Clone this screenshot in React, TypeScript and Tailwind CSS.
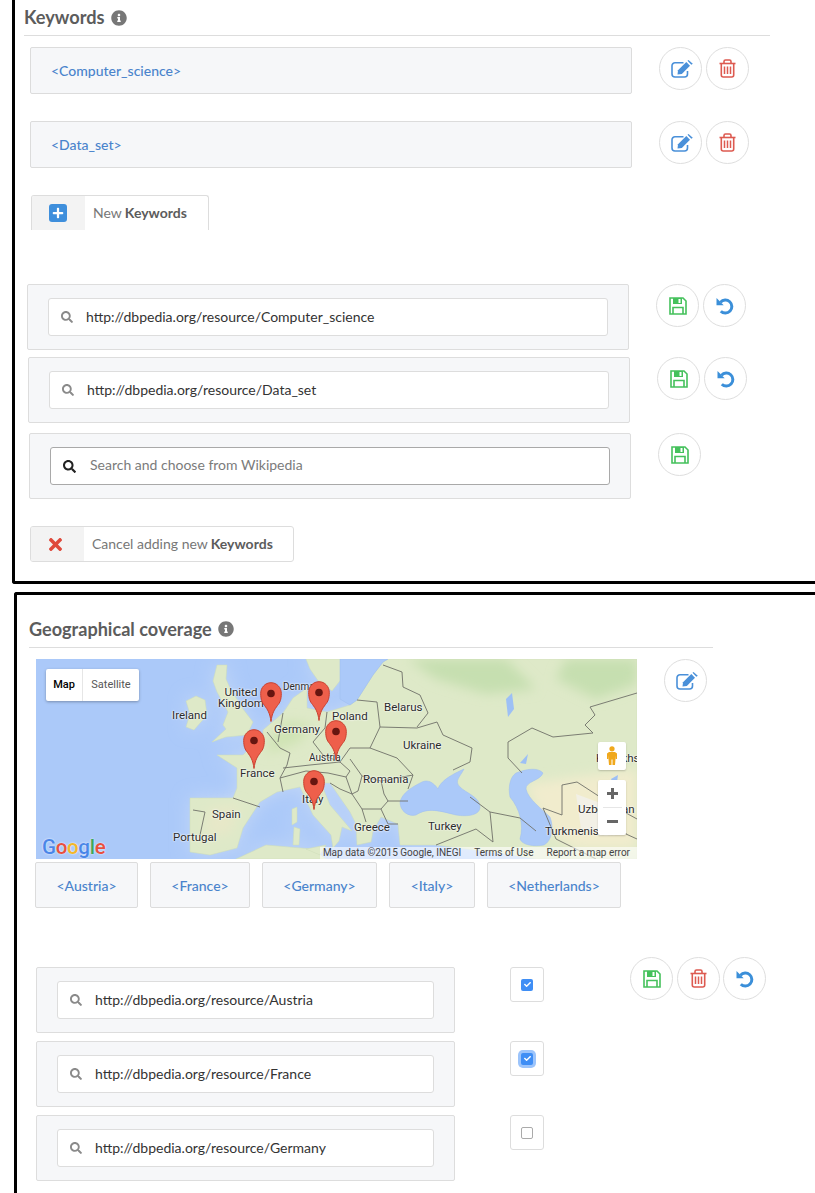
import type { ReactNode } from 'react'
import { FaInfoCircle, FaPlus, FaSearch, FaTimes, FaCheck } from 'react-icons/fa'

const CircleButton = ({ children }: { children: ReactNode }) => (
  <button className="flex h-[43px] w-[43px] items-center justify-center rounded-full border border-[#dedede] bg-white">
    {children}
  </button>
)

const EditIcon = () => (
  <svg className="ml-[2px]" width="22" height="18" viewBox="0 0 22 18">
    <path
      d="M12.500 2.800H4a3 3 0 0 0-3 3v8.200a3 3 0 0 0 3 3h9.500a3 3 0 0 0 3-3V11"
      fill="none"
      stroke="#4a90d9"
      strokeWidth="1.600"
    />
    <path d="M7 10.200 15.300 2 19 5.700 10.800 14 6.500 14.500Z" fill="#4a90d9" />
    <path d="M16.500.8 17.500 0 21.800 3.800 20.300 4.800Z" fill="#4a90d9" />
  </svg>
)

const TrashIcon = () => (
  <svg width="17" height="19" viewBox="0 0 17 19" fill="none" stroke="#dd5a50" strokeWidth="1.600">
    <path d="M.500 4.500H16.500" />
    <path d="M5 4.500V2.500A1.500 1.500 0 0 1 6.500 1h4A1.500 1.500 0 0 1 12 2.500V4.500" />
    <path d="M2.300 4.500V16a2 2 0 0 0 2 2h8.400a2 2 0 0 0 2-2V4.500" />
    <path d="M5.500 7.500V15M8.500 7.500V15M11.500 7.500V15" strokeWidth="1.500" />
  </svg>
)

const SaveIcon = () => (
  <svg width="18" height="18" viewBox="0 0 18 18">
    <path d="M1 1H14L17 4V17H1Z" fill="none" stroke="#45c15c" strokeWidth="1.600" />
    <path d="M4 1H13V7H4Z" fill="#45c15c" />
    <path d="M9.500 2H11.500V6H9.500Z" fill="#fff" />
    <path d="M4 17V10.500H14V17" fill="none" stroke="#45c15c" strokeWidth="1.600" />
  </svg>
)

const UndoIcon = () => (
  <svg width="18" height="18" viewBox="0 0 18 18">
    <path d="M4.500 5.200A6.500 6.500 0 1 1 4.800 14.200" fill="none" stroke="#3b8fd9" strokeWidth="3" />
    <path d="M.500 1V8.200H7.700Z" fill="#3b8fd9" />
  </svg>
)

const KeywordRow = ({ label }: { label: string }) => (
  <div className="ml-[15px] flex items-start">
    <div className="flex h-[47px] w-[602px] items-center rounded-[2px] border border-[#dcdcdc] bg-[#f6f7f9] pl-[20px] text-[14px] font-medium text-[#4a84cc]">
      {label}
    </div>
    <div className="ml-[27px] flex gap-1">
      <CircleButton>
        <EditIcon />
      </CircleButton>
      <CircleButton>
        <TrashIcon />
      </CircleButton>
    </div>
  </div>
)

const SearchBox = ({
  value,
  placeholder,
  className,
}: {
  value?: string
  placeholder?: string
  className: string
}) => (
  <div className={`rounded-[2px] border border-[#dddddd] bg-[#f6f7f9] px-[20px] py-[13px] ${className}`}>
    <div
      className={`flex h-[38px] items-center rounded-[3px] border bg-white pl-[12px] text-[14px] ${
        placeholder ? 'border-[#a9a9a9]' : 'border-[#dddddd]'
      }`}
    >
      {placeholder ? (
        <FaSearch className="text-[13px] text-[#222222]" />
      ) : (
        <FaSearch className="text-[12px] text-[#8a8a8a]" />
      )}
      <span className={placeholder ? 'ml-[14px] pb-[3px] text-[#7b7b7b]' : 'ml-[13px] pb-[2px] text-[#333333]'}>
        {value ?? placeholder}
      </span>
    </div>
  </div>
)

const Pin = ({ x, y }: { x: number; y: number }) => (
  <svg className="absolute" style={{ left: x, top: y }} width="22" height="40" viewBox="0 0 22 40">
    <path
      d="M11 39.500C10 31 7.500 27.500 4.500 23.500 2 20.500.7 17.500.7 11.500.7 5.500 5.200.7 11 .7s10.300 4.800 10.300 10.800c0 6-1.300 9-3.800 12-3 4-5.500 7.500-6.500 16z"
      fill="#ee5f4b"
      stroke="#c9402f"
      strokeWidth="1"
    />
    <circle cx="11" cy="11.500" r="3.800" fill="#661510" />
  </svg>
)

const mapLabels: { text: string; x: number; y: number; size?: string }[] = [
  { text: 'Ireland', x: 136, y: 51 },
  { text: 'Germany', x: 238, y: 65 },
  { text: 'Denma', x: 247, y: 23, size: 'text-[10px]' },
  { text: 'Poland', x: 296, y: 52 },
  { text: 'Belarus', x: 348, y: 43 },
  { text: 'Ukraine', x: 367, y: 81 },
  { text: 'Austria', x: 273, y: 94, size: 'text-[10px]' },
  { text: 'France', x: 204, y: 109 },
  { text: 'Italy', x: 266, y: 135 },
  { text: 'Romania', x: 327, y: 115 },
  { text: 'Spain', x: 176, y: 150 },
  { text: 'Portugal', x: 137, y: 173 },
  { text: 'Greece', x: 318, y: 163 },
  { text: 'Turkey', x: 392, y: 162 },
  { text: 'Turkmenistan', x: 509, y: 167 },
  { text: 'Uzbekistan', x: 542, y: 145 },
  { text: 'Kazakhstan', x: 560, y: 94 },
]

const land = [
  'M227 71 247 54 257 39 271 29 271 49 291 53 314 46 321 41 337 16 347 3 352 0 601 0 601 200 500 200 470 195 400 186 364 186 362 165 345 158 337 172 335 183 321 186 320 165 314 153 294 124 288 124 287 129 294 146 311 166 316 172 306 168 303 182 297 189 295 176 277 156 264 128 241 133 224 143 207 169 201 189 174 196 154 193 154 139 197 139 201 129 201 109 181 96 207 96 227 76Z',
  'M150 42 160 37 169 41 171 56 158 71 150 68 154 55Z',
  'M181 6 191 6 190 20 194 29 207 50 217 63 211 76 190 78 176 83 190 70 187 66 192 53 181 33 177 22Z',
  'M270 0 314 0 310 14 296 32 283 23 274 10Z',
  'M200 200 230 186 277 190 290 200Z',
  'M256 150 261 148 261 163 256 166Z',
  'M258 168 264 170 263 186 257 186Z',
  'M270 190 290 186 284 196Z',
]

const borders = [
  '231,73 244,89 254,94 251,106 244,119 247,133',
  '247,54 242,83',
  '291,53 289,69 277,83 287,96 304,103 314,89',
  '247,109 274,106 304,103',
  '244,119 270,112 292,114 310,118',
  '197,139 224,148',
  '157,151 169,153 164,176',
  '347,6 366,13 367,28 384,36 392,54 381,68',
  '341,43 344,68 334,89 314,89',
  '321,41 341,43',
  '344,68 381,69 401,63 407,76 436,89 434,103 417,111',
  '334,89 361,99 377,116',
  '314,100 326,117 345,122 377,116 372,130',
  '310,118 316,135 326,150 345,150 352,142',
  '326,150 330,163',
  '352,142 372,142',
  '434,138 454,153 484,159 500,172',
  '454,153 457,183',
  '472,83 496,69 517,78 557,74 549,66 559,56 554,48 601,34',
  '472,83 472,99 486,114',
  '526,126 541,123 581,149 601,160',
  '526,126 526,156 507,149',
  '507,149 520,180 560,200',
  '581,149 590,175 601,180',
  '304,103 314,112 310,118',
  '316,135 304,130 294,124',
  '326,117 322,132 316,135',
  '345,122 348,135 352,142',
  '345,150 352,165 362,165',
  '400,186 440,170 457,183',
]

const MapView = () => (
  <div className="relative h-[200px] w-[601px] shrink-0 overflow-hidden bg-[#abc9f9] font-['Roboto',sans-serif]">
    <svg className="absolute inset-0" width="601" height="200" viewBox="0 0 601 200">
      <defs>
        <filter id="soft">
          <feGaussianBlur stdDeviation="6" />
        </filter>
        <filter id="glow">
          <feGaussianBlur stdDeviation="9" />
        </filter>
      </defs>
      <g fill="#c3d7f7" filter="url(#glow)">
        {land.map((d) => (
          <path key={d} d={d} />
        ))}
      </g>
      <g fill="#dee9c8" stroke="#cddcb8" strokeWidth="0.500">
        {land.map((d) => (
          <path key={d} d={d} />
        ))}
      </g>
      <g filter="url(#soft)">
        <path d="M372 0 470 0 500 30 450 35 400 20Z" fill="#c6dfb0" />
        <path d="M530 0 601 0 601 25 560 40 520 20Z" fill="#c6dfb0" />
        <path d="M490 125 601 110 601 190 540 190 510 170Z" fill="#f1eccd" />
        <path d="M230 95 262 84 276 66 250 62 235 78Z" fill="#cfe3b4" />
        <path d="M172 150 205 145 195 175 170 178Z" fill="#e7e8c8" />
      </g>
      <path d="M540 135 575 148 590 175 545 170Z" fill="#f2f0e6" />
      <g fill="#abc9f9" stroke="#9dbcee" strokeWidth="0.500">
        <path d="M304 0H352L347 3 337 16 321 41 314 46 304 40Z" />
        <path d="M364 143C366 134 376 128 386 123 392 120 398 124 402 130 404 124 410 118 428 110 424 118 418 122 424 128 430 134 444 138 444 148 444 156 432 158 420 156 404 152 392 148 380 156 372 158 364 152 364 143Z" />
        <path d="M480 114C490 110 502 108 507 114 504 122 490 122 490 130 492 140 506 150 514 158 518 168 516 182 508 186 498 188 486 186 484 180 488 166 484 150 474 138 472 128 474 118 480 114Z" />
      </g>
      <g fill="#9dc0f5">
        <path d="M470 40 476 34 478 50 472 58Z" />
        <path d="M484 104 492 95 490 105Z" />
        <path d="M575 120 582 116 580 130Z" />
      </g>
      <g fill="none" stroke="#6f7069" strokeWidth="0.900">
        {borders.map((points) => (
          <polyline key={points} points={points} />
        ))}
      </g>
    </svg>

    {mapLabels.map((l) => (
      <span
        key={l.text}
        className={`absolute whitespace-nowrap leading-none text-[#2b2b2b] [text-shadow:0_0_2px_#fff,0_0_2px_#fff] ${l.size ?? 'text-[11.500px]'}`}
        style={{ left: l.x, top: l.y }}
      >
        {l.text}
      </span>
    ))}
    <span className="absolute left-[182px] top-[28px] text-center text-[11.500px] leading-[11px] text-[#2b2b2b] [text-shadow:0_0_2px_#fff,0_0_2px_#fff]">
      United
      <br />
      Kingdom
    </span>

    <Pin x={224} y={23} />
    <Pin x={272} y={22} />
    <Pin x={207} y={70} />
    <Pin x={289} y={61} />
    <Pin x={267} y={111} />

    <div className="absolute left-[10px] top-[10px] flex h-[32px] w-[93px] items-center rounded-[2px] bg-white text-[11px] shadow-[0_1px_3px_rgba(0,0,0,0.3)]">
      <span className="flex h-full w-[37px] items-center justify-center border-r border-[#e6e6e6] font-medium text-black">Map</span>
      <span className="flex-1 text-center text-[#565656]">Satellite</span>
    </div>

    <div className="absolute left-[562px] top-[83px] flex h-[28px] w-[28px] items-center justify-center rounded-[2px] bg-white shadow-[0_1px_2px_rgba(0,0,0,0.2)]">
      <svg width="12" height="20" viewBox="0 0 12 20">
        <circle cx="6" cy="2.800" r="2.600" fill="#f0a81c" />
        <path d="M3 6h6l2 1.500V13H9.800V9.500L9 19H6.500V13.500H5.500V19H3L2.200 9.500V13H1V7.500Z" fill="#f0a81c" />
      </svg>
    </div>
    <div className="absolute left-[562px] top-[121px] flex h-[55px] w-[28px] flex-col items-center rounded-[2px] bg-white shadow-[0_1px_2px_rgba(0,0,0,0.2)]">
      <span className="flex h-[27px] items-center justify-center text-[#666666]">
        <svg width="11" height="11" viewBox="0 0 11 11">
          <path d="M4 0h3v4h4v3H7v4H4V7H0V4h4z" fill="currentColor" />
        </svg>
      </span>
      <span className="h-px w-[19px] bg-[#e6e6e6]" />
      <span className="flex h-[27px] items-center justify-center text-[#666666]">
        <span className="block h-[3px] w-[11px] bg-current" />
      </span>
    </div>

    <div className="absolute bottom-[2px] left-[6px] text-[20.500px] font-medium leading-none tracking-[-0.300px] [text-shadow:0_0_2px_#fff]">
      <span className="text-[#4a86e8]">G</span>
      <span className="text-[#e8503f]">o</span>
      <span className="text-[#f3b72a]">o</span>
      <span className="text-[#4a86e8]">g</span>
      <span className="text-[#3fa757]">l</span>
      <span className="text-[#e8503f]">e</span>
    </div>

    <div className="absolute bottom-0 right-0 flex h-[12px] w-[317px] items-center justify-end gap-[13px] bg-[#ffffff99] pr-[7px] text-[10px] leading-none text-[#444444]">
      <span>Map data ©2015 Google, INEGI</span>
      <span>Terms of Use</span>
      <span>Report a map error</span>
    </div>
  </div>
)

const GeoTag = ({ label, width }: { label: string; width: string }) => (
  <div
    className={`flex h-[46px] items-center justify-center rounded-[2px] border border-[#dcdcdc] bg-[#f6f7f9] pt-[1px] text-[14px] font-medium text-[#4a84cc] ${width}`}
  >
    {label}
  </div>
)

const Check = ({ state }: { state: 'on' | 'focus' | 'off' }) => (
  <div className="ml-[55px] flex h-[35px] w-[34px] items-center justify-center rounded-[3px] border border-[#dddddd] bg-white">
    {state === 'off' ? (
      <span className="block h-[12px] w-[12px] rounded-[2px] border border-[#aaaaaa]" />
    ) : (
      <span
        className={`flex h-[12px] w-[12px] items-center justify-center rounded-[2px] bg-[#3f8ef5] ${
          state === 'focus' ? 'shadow-[0_0_0_3px_#9cc4fb]' : ''
        }`}
      >
        <FaCheck className="text-[7px] text-white" />
      </span>
    )}
  </div>
)

export default function App() {
  return (
    <div className="h-[1193px] w-[815px] overflow-hidden bg-white font-['Lato',sans-serif]">
      <div className="ml-[12px] h-[584px] rounded-bl-[3px] border-b-[3px] border-l-[3px] border-black">
        <div className="ml-[9px] flex h-[36px] w-[746px] items-center gap-[6px] border-b border-[#dddddd] text-[18.200px] font-bold text-[#5c5c5c]">
          Keywords
          <FaInfoCircle className="text-[16px] text-[#777777]" />
        </div>

        <div className="mt-[11px]">
          <KeywordRow label="<Computer_science>" />
        </div>
        <div className="mt-[27px]">
          <KeywordRow label="<Data_set>" />
        </div>

        <div className="ml-[16px] mt-[27px] flex h-[35px] w-[178px] items-stretch overflow-hidden rounded-t-[3px] border-x border-t border-[#dddddd]">
          <span className="flex w-[53px] items-center justify-center bg-[#f3f3f3]">
            <span className="mr-[2px] flex h-[18px] w-[18px] items-center justify-center rounded-[3px] bg-[#3f8fdc]">
              <FaPlus className="text-[12px] text-white" />
            </span>
          </span>
          <span className="ml-[8px] flex items-center gap-[3px] pb-[2px] text-[14px] text-[#777777]">
            New <b className="font-bold text-[#5c5c5c]">Keywords</b>
          </span>
        </div>

        <div className="ml-[12px] mt-[54px] flex items-start">
          <SearchBox className="w-[602px]" value="http://dbpedia.org/resource/Computer_science" />
          <div className="ml-[27px] flex gap-1">
            <CircleButton>
              <SaveIcon />
            </CircleButton>
            <CircleButton>
              <UndoIcon />
            </CircleButton>
          </div>
        </div>
        <div className="ml-[13px] mt-[7px] flex items-start">
          <SearchBox className="w-[602px]" value="http://dbpedia.org/resource/Data_set" />
          <div className="ml-[27px] flex gap-1">
            <CircleButton>
              <SaveIcon />
            </CircleButton>
            <CircleButton>
              <UndoIcon />
            </CircleButton>
          </div>
        </div>
        <div className="ml-[14px] mt-[10px] flex items-start">
          <SearchBox className="w-[602px]" placeholder="Search and choose from Wikipedia" />
          <div className="ml-[27px]">
            <CircleButton>
              <SaveIcon />
            </CircleButton>
          </div>
        </div>

        <div className="ml-[15px] mt-[27px] flex h-[36px] w-[264px] items-stretch overflow-hidden rounded-[3px] border border-[#dddddd]">
          <span className="flex w-[53px] items-center justify-center bg-[#f3f3f3]">
            <FaTimes className="mr-[4px] text-[19px] text-[#df4a3c]" />
          </span>
          <span className="ml-[8px] flex items-center gap-[3px] pb-[2px] text-[14px] text-[#777777]">
            Cancel adding new <b className="font-bold text-[#5c5c5c]">Keywords</b>
          </span>
        </div>
      </div>

      <div className="ml-[14px] mt-[8px] h-[601px] rounded-tl-[3px] border-l-[3px] border-t-[3px] border-black">
        <div className="ml-[12px] flex h-[53px] w-[684px] items-end gap-[6px] border-b border-[#dddddd] pb-[6px] text-[18.100px] font-bold leading-[24px] text-[#5c5c5c]">
          Geographical coverage
          <FaInfoCircle className="mb-[4px] text-[16px] text-[#777777]" />
        </div>

        <div className="ml-[19px] mt-[11px] flex items-start">
          <MapView />
          <div className="ml-[27px]">
            <CircleButton>
              <EditIcon />
            </CircleButton>
          </div>
        </div>

        <div className="ml-[18px] mt-[3px] flex gap-[12px]">
          <GeoTag label="<Austria>" width="w-[103px]" />
          <GeoTag label="<France>" width="w-[100px]" />
          <GeoTag label="<Germany>" width="w-[115px]" />
          <GeoTag label="<Italy>" width="w-[86px]" />
          <GeoTag label="<Netherlands>" width="w-[134px]" />
        </div>

        <div className="ml-[19px] mt-[59px] flex items-start">
          <div className="flex flex-col gap-[8px]">
            <div className="flex items-start">
              <SearchBox className="w-[419px]" value="http://dbpedia.org/resource/Austria" />
              <Check state="on" />
            </div>
            <div className="flex items-start">
              <SearchBox className="w-[419px]" value="http://dbpedia.org/resource/France" />
              <Check state="focus" />
            </div>
            <div className="flex items-start">
              <SearchBox className="w-[419px]" value="http://dbpedia.org/resource/Germany" />
              <Check state="off" />
            </div>
          </div>
          <div className="-mt-[10px] ml-[86px] flex gap-[3.500px]">
            <CircleButton>
              <SaveIcon />
            </CircleButton>
            <CircleButton>
              <TrashIcon />
            </CircleButton>
            <CircleButton>
              <UndoIcon />
            </CircleButton>
          </div>
        </div>
      </div>
    </div>
  )
}
